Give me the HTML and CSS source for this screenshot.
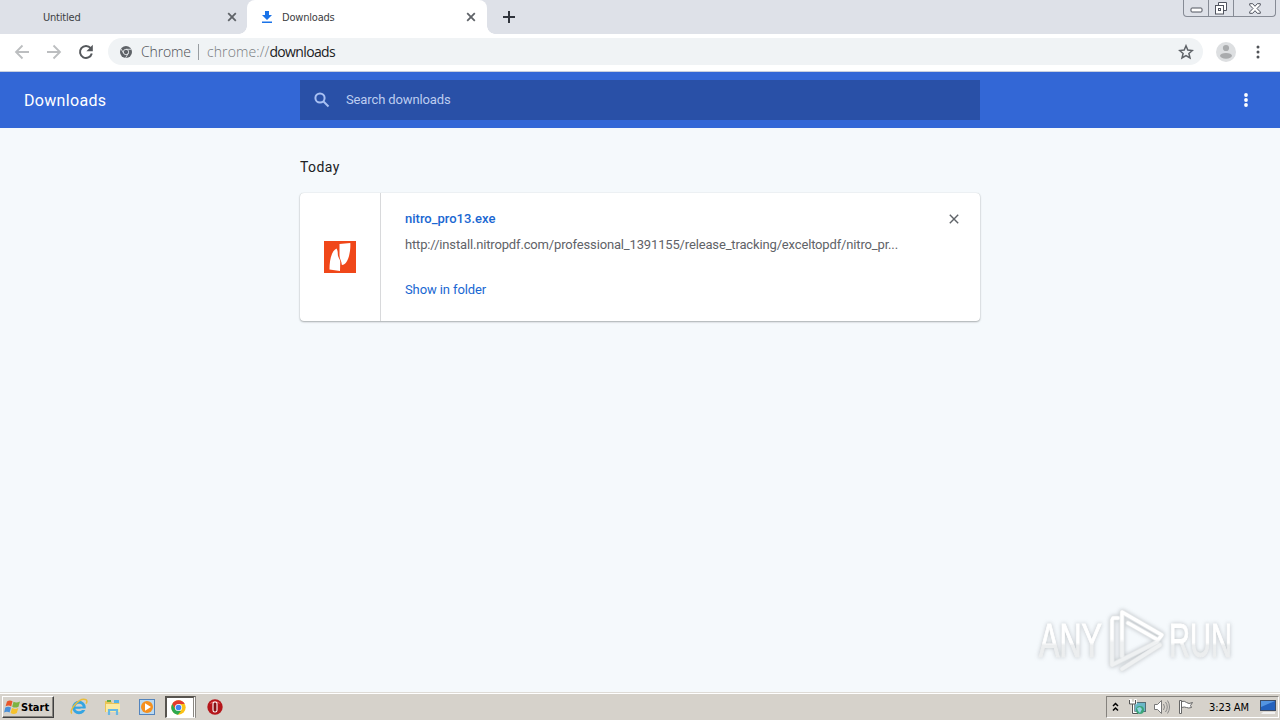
FILE: index.html
```html
<!DOCTYPE html>
<html lang="en">
<head>
  <meta charset="UTF-8" />
  <meta name="viewport" content="width=device-width, initial-scale=1.0"/>
  <title>Downloads</title>
  <link rel="stylesheet" href="styles.css">
</head>
<body>

  <div class="tabstrip">
    <div class="tab">
      <span class="tab-title">Untitled</span>
      <svg class="tab-close" width="10" height="10" viewBox="0 0 10 10"><path d="M1.2 1.2l7.6 7.6M8.8 1.2L1.2 8.8"/></svg>
    </div>
    <div class="tab active">
      <svg class="tab-icon" width="12" height="12" viewBox="0 0 12 12"><path d="M4 0h4v4h3L6 9 1 4h3zM1 10.4h10V12H1z"/></svg>
      <span class="tab-title">Downloads</span>
      <svg class="tab-close" width="10" height="10" viewBox="0 0 10 10"><path d="M1.2 1.2l7.6 7.6M8.8 1.2L1.2 8.8"/></svg>
    </div>
    <svg class="new-tab" width="12" height="12" viewBox="0 0 12 12"><path d="M6 0v12M0 6h12"/></svg>
    <div class="window-buttons">
      <span class="win-min"><svg width="13" height="6" viewBox="0 0 13 6"><rect x="1" y="1" width="11" height="4" rx="1"/></svg></span>
      <span class="win-max"><svg width="14" height="13" viewBox="0 0 14 13"><path d="M4.5 3.5v-3h8v8h-3"/><rect x="1.5" y="3.5" width="8" height="8.500"/><rect x="4.500" y="6.500" width="2" height="2"/></svg></span>
      <span class="win-close"><svg width="12" height="11" viewBox="0 0 12 11"><path d="M.7.7h3L6 3.300 8.300.7h3v1.400L8 5.500l3.300 3.400v1.400h-3L6 7.700l-2.300 2.600h-3V8.900L4 5.500.7 2.100z"/></svg></span>
    </div>
  </div>

  <div class="toolbar">
    <svg class="nav-icon" width="16" height="16" viewBox="0 0 16 16"><path d="M15 8H2M8.500 1.500L2 8l6.500 6.500"/></svg>
    <svg class="nav-icon" width="16" height="16" viewBox="0 0 16 16"><path d="M1 8h13M7.500 1.500L14 8l-6.500 6.500"/></svg>
    <svg class="nav-icon reload" width="16" height="16" viewBox="0 0 16 16"><path d="M12.700 4.200A6 6 0 1 0 13.800 9.500"/><path class="solid" d="M14.800.8v6.400H8.400z"/></svg>
    <div class="omnibox">
      <svg class="site-icon" width="12" height="12" viewBox="0 0 12 12"><circle cx="6" cy="6" r="6"/><g><circle cx="6" cy="6" r="2.700"/><path d="M6 3.300h5.400M3.700 7.300L1 2.900M8.300 7.300l-2.700 4.600"/></g></svg>
      <span class="site-name">Chrome</span>
      <span class="divider"></span>
      <span class="url">chrome://<b>downloads</b></span>
      <svg class="star" width="16" height="16" viewBox="0 0 16 16"><path d="M8 1.800l1.800 4.300 4.600.4-3.500 3 1.100 4.500L8 11.600 4 14l1.100-4.500-3.500-3 4.600-.4z"/></svg>
    </div>
    <svg class="avatar" width="20" height="20" viewBox="0 0 20 20"><circle class="disc" cx="10" cy="10" r="10"/><circle cx="10" cy="6" r="3.100"/><ellipse cx="10" cy="13.800" rx="6" ry="2.900"/></svg>
    <svg class="menu" width="4" height="14" viewBox="0 0 4 14"><circle cx="2" cy="2" r="1.500"/><circle cx="2" cy="7" r="1.500"/><circle cx="2" cy="12" r="1.500"/></svg>
  </div>

  <header>
    <h1>Downloads</h1>
    <div class="search">
      <svg width="16" height="16" viewBox="0 0 16 16"><circle cx="6" cy="6" r="4.600"/><path d="M9.500 9.500l5 5"/></svg>
      <span>Search downloads</span>
    </div>
    <svg class="more" width="4" height="14" viewBox="0 0 4 14"><circle cx="2" cy="2" r="1.900"/><circle cx="2" cy="7" r="1.900"/><circle cx="2" cy="12" r="1.900"/></svg>
  </header>

  <main>
    <h2>Today</h2>
    <div class="card">
      <div class="file-icon">
        <svg width="32" height="32" viewBox="0 0 32 32"><rect width="32" height="32" fill="#f04719"/><path fill="#fff" d="M15.500 3l10.800-1c.4 6.700-1 15.300-4.200 19.500-1.100 1.400-2.500 2.200-4.200 2.400-.3-3.500-2.600-6.500-2.400-10zM12.500 7.500c1 1.500 1.300 3 1.300 5.500 0 4 3 5 2.400 9.500L16 30 5.500 28.500C5.500 19 7.500 10 12.500 7.500z"/></svg>
      </div>
      <div class="details">
        <div class="title-row">
          <a class="file-name">nitro_pro13.exe</a>
          <svg class="remove" width="10" height="10" viewBox="0 0 10 10"><path d="M.8.8l8.400 8.400M9.200.8L.8 9.200"/></svg>
        </div>
        <div class="file-url">http://install.nitropdf.com/professional_1391155/release_tracking/exceltopdf/nitro_pr...</div>
        <a class="show">Show in folder</a>
      </div>
    </div>
  </main>

  <svg class="watermark" width="250" height="76" viewBox="0 0 250 76">
    <defs>
      <linearGradient id="fade" x1="0" y1="0" x2="0" y2="1">
        <stop offset="0.550" stop-color="#fff"/>
        <stop offset="0.600" stop-color="#eceeef"/>
      </linearGradient>
      <linearGradient id="play-fade" gradientUnits="userSpaceOnUse" x1="0" y1="0" x2="0" y2="70">
        <stop offset="0.500" stop-color="#fff"/>
        <stop offset="0.550" stop-color="#eff1f2"/>
      </linearGradient>
    </defs>
    <text x="9" y="53" textLength="63" lengthAdjust="spacingAndGlyphs">ANY</text>
    <text x="139" y="53" textLength="63" lengthAdjust="spacingAndGlyphs">RUN</text>
    <g class="play">
      <path class="edge" d="M88 14h-5l-1 2v45l45-23M92 52V8l40 23-4 5-30-17M92 65l38-24"/>
      <path class="line" d="M88 14h-5l-1 2v45l45-23M92 52V8l40 23-4 5-30-17M92 65l38-24"/>
    </g>
  </svg>

  <footer>
    <div class="start">
      <svg width="17" height="16" viewBox="0 0 17 16"><path fill="#e8562a" d="M3 2.500C5 1 7 1.300 8.500 2.300L7.200 7.500C5.500 6.300 3.500 6.400 1.600 7.300z"/><path fill="#7cb342" d="M9.500 2.800c2 1.100 4 1 6.500-.3l-1.500 5.200c-2.200 1.200-4.300 1.200-6.300 0z"/><path fill="#4a90d9" d="M1.300 8.500c2-1.100 4-1 5.700.1l-1.400 5c-1.600-1.200-3.600-1.100-5.500-.2z"/><path fill="#f6c22d" d="M8 9.100c2 1.100 4 1 6.300-.1l-1.500 5c-2.200 1.300-4.200 1.200-6.200 0z"/></svg>
      <span>Start</span>
    </div>
    <div class="quick">
      <svg width="18" height="18" viewBox="0 0 18 18"><circle cx="9" cy="9.500" r="5.300" fill="none" stroke="#35a5e2" stroke-width="3"/><path d="M4 9.700h10" stroke="#35a5e2" stroke-width="2.200"/><path d="M10.500 12h6v-1.500h-6z" fill="#d6d3ce"/><path d="M2 15.500C-2 13 9-1 16 1.700c1.500.8.8 2.800 0 4" fill="none" stroke="#e9bd3b" stroke-width="1.500"/></svg>
      <svg width="18" height="18" viewBox="0 0 18 18"><path fill="#e9c456" d="M1 3h6l1 2h7v9H1z"/><path fill="#fbeaa2" d="M2 6h14v8H2z"/><path fill="#62aa43" d="M3 2h4v2H3z"/><path fill="#58b4e5" d="M10 2h5v3h-5z"/><path fill="none" stroke="#68b8e2" stroke-width="2.200" d="M5 17v-5h8v5"/></svg>
      <svg width="18" height="18" viewBox="0 0 18 18"><rect x="1.500" y="1.500" width="15" height="15" fill="#bad9f1" stroke="#5384bd"/><circle cx="9" cy="9" r="6" fill="#f5901e"/><path fill="#fff" d="M7 5.300l6 3.700-6 3.700z"/></svg>
      <span class="task">
        <svg width="15" height="15" viewBox="0 0 48 48"><circle cx="24" cy="24" r="23" fill="#fbc116"/><path fill="#e33b2e" d="M4 12.500A23 23 0 0 1 44 12.500H24L14 30z"/><path fill="#2da94f" d="M4 12.500L14 30l10 5 8 0-10 12A23 23 0 0 1 4 12.500z"/><circle cx="24" cy="24" r="11.500" fill="#fff"/><circle cx="24" cy="24" r="9" fill="#4285f4"/></svg>
      </span>
      <svg width="16" height="16" viewBox="0 0 16 16"><circle cx="8" cy="8" r="7.700" fill="#b5161b"/><path fill="#ee6664" d="M2.500 5a6.500 6 0 0 1 11 0Q8 2.500 2.500 5z"/><rect x="6" y="3" width="4" height="10" rx="1.800" fill="#851013" stroke="#fff" stroke-width="1.100"/></svg>
    </div>
    <div class="tray">
      <svg class="expand" width="7" height="10" viewBox="0 0 7 10"><path class="chevrons" d="M1 4l2.500-2.500L6 4M1 8.500L3.500 6 6 8.500"/></svg>
      <svg width="17" height="16" viewBox="0 0 17 16"><rect x="5.500" y="3.500" width="11" height="9" fill="#69b7c7" stroke="#536c75"/><path fill="none" stroke="#fff" stroke-width="2.600" d="M1.500 0v4h5V0M4 4v10h4"/><path fill="none" stroke="#555" d="M.5 1v4h6V1M3.500 5v9.500H9"/><circle cx="11" cy="11" r="4" fill="#3ca579"/><path fill="#92d1e6" d="M8 9l3-1 2 2-2 4-2-2z"/></svg>
      <svg width="18" height="16" viewBox="0 0 18 16"><path fill="#fff" stroke="#777" d="M1.500 5.500h3l4-4v13l-4-4h-3z"/><path fill="none" stroke="#888" d="M10.500 5q2 3 0 6M12.500 3q3.500 5 0 10M14.500 1.500q4 6.500 0 13"/></svg>
      <svg width="16" height="16" viewBox="0 0 16 16"><path fill="#fff" stroke="#666" d="M1.500 1.500h2v13h-2zM3.500 2.500q3-1 5 1t6 0l-2 3 1 2q-3 1-5 0t-5 0z"/></svg>
      <span class="clock">3:23 AM</span>
      <svg class="desktop" width="17" height="14" viewBox="0 0 17 14"><rect x=".5" y=".5" width="15" height="10" fill="#2361bd" stroke="#3d4c65"/><path fill="#5394e1" d="M1 1h14L1 7z"/><path fill="#f1f1f1" d="M3 12h12v2H1z"/></svg>
    </div>
  </footer>

</body>
</html>
```
FILE: styles.css
```css
* {
  box-sizing: border-box;
}

body {
  margin: 0;
  height: 720px;
  display: flex;
  flex-direction: column;
  overflow: hidden;
  background: #f5f9fc;
  font-family: Roboto, sans-serif;
}

svg {
  display: block;
  flex: none;
}

.tabstrip {
  display: flex;
  align-items: center;
  height: 34px;
  background: #dee1e8;
  font-family: "DejaVu Sans Condensed", "DejaVu Sans", sans-serif;
  font-stretch: condensed;
  font-size: 11px;
  color: #3c4043;
}

.tab {
  display: flex;
  align-items: center;
  width: 247px;
  height: 34px;
  padding: 0 10px 0 43px;
}

.tab.active {
  position: relative;
  width: 240px;
  padding: 0 11px 0 14px;
  background: #fff;
  border-radius: 8px 8px 0 0;
}

/* flared feet of the active tab */
.tab.active::before,
.tab.active::after {
  content: "";
  position: absolute;
  bottom: 0;
  width: 8px;
  height: 8px;
}

.tab.active::before {
  left: -8px;
  background: radial-gradient(circle at 0 0, transparent 7.5px, #fff 8px);
}

.tab.active::after {
  right: -8px;
  background: radial-gradient(circle at 100% 0, transparent 7.5px, #fff 8px);
}

.tab-title {
  flex: 1;
  letter-spacing: -0.2px;
}

.tab-icon {
  margin-right: 9px;
  fill: #1a73e8;
}

.tab-close {
  fill: none;
  stroke: #5f6368;
  stroke-width: 1.8;
}

.new-tab {
  margin-left: 16px;
  stroke: #30343c;
  stroke-width: 2;
}

.window-buttons {
  display: flex;
  align-self: flex-start;
  width: 93px;
  height: 17px;
  margin-left: auto;
  margin-right: 4px;
  border: 1px solid #868b95;
  border-top: 0;
  border-radius: 0 0 4px 4px;
}

.window-buttons span {
  display: flex;
  justify-content: center;
  width: 25px;
  padding-top: 2px;
  border-right: 1px solid #868b95;
}

.window-buttons .win-min {
  padding-top: 7px;
}

.window-buttons .win-close {
  width: 41px;
  padding-top: 3px;
  border-right: 0;
}

.window-buttons svg {
  fill: #fff;
  stroke: #50545f;
}

.toolbar {
  display: flex;
  align-items: center;
  height: 38px;
  padding: 0 20px 2px 14px;
  background: #fff;
  border-bottom: 1px solid #c9d0df;
}

.nav-icon {
  margin-right: 16px;
  fill: none;
  stroke: #bcbec0;
  stroke-width: 1.8;
}

.nav-icon.reload {
  margin-right: 14px;
  stroke: #55585c;
  stroke-width: 2;
}

.nav-icon .solid {
  fill: #55585c;
  stroke: none;
}

.omnibox {
  display: flex;
  align-items: center;
  width: 1095px;
  height: 27px;
  padding: 0 9px 0 12px;
  border-radius: 14px;
  background: #f0f3f5;
  font-family: "Open Sans", "Noto Sans", sans-serif;
  font-weight: 300;
  font-size: 14px;
  color: #4c4f54;
}

.site-icon {
  fill: #5f6368;
  margin-right: 9px;
}

.site-icon g {
  stroke: #f0f3f5;
  stroke-width: 0.8;
}

.site-name {
  width: 50px;
  letter-spacing: -0.15px;
}

.divider {
  width: 1px;
  height: 16px;
  margin: 0 8px 0 7px;
  background: #999da1;
}

.url {
  flex: 1;
  letter-spacing: 0.1px;
  color: #777b80;
}

.url b {
  font-weight: 400;
  letter-spacing: -0.65px;
  color: #202124;
}

.star {
  fill: none;
  stroke: #5f6368;
  stroke-width: 1.5;
}

.avatar {
  margin-left: 13px;
  fill: #a9abad;
}

.avatar .disc {
  fill: #dddfe1;
}

.menu {
  margin-left: auto;
  fill: #505357;
}

header {
  display: flex;
  align-items: center;
  height: 56px;
  padding: 0 32px 0 24px;
  background: #3367d6;
  color: #fff;
}

h1 {
  width: 276px;
  margin: 0;
  font-size: 16px;
  font-weight: 400;
  letter-spacing: 0.32px;
}

.search {
  display: flex;
  align-items: center;
  width: 680px;
  height: 40px;
  padding: 0 0 1px 14px;
  background: #2950a7;
  color: #bdcdf0;
  font-size: 13px;
  letter-spacing: -0.12px;
}

.search svg {
  margin-right: 16px;
  fill: none;
  stroke: #a8c0f3;
  stroke-width: 2;
}

.more {
  margin-left: auto;
  fill: #fff;
}

main {
  flex: 1;
  width: 680px;
  margin: 0 auto;
  padding-top: 30px;
}

h2 {
  margin: 0 0 16px;
  font-size: 14px;
  line-height: 19px;
  font-weight: 400;
  letter-spacing: 0.4px;
  color: #202124;
}

.card {
  display: flex;
  height: 128px;
  border-radius: 4px;
  background: #fff;
  box-shadow: 0 1px 2px rgba(60, 64, 67, 0.4), 0 0 1px rgba(60, 64, 67, 0.25);
}

.file-icon {
  display: flex;
  align-items: center;
  justify-content: center;
  width: 81px;
  border-right: 1px solid #d8d9db;
}

.details {
  flex: 1;
  padding: 16px 21px 0 24px;
  font-size: 13px;
  line-height: 20px;
}

.title-row {
  display: flex;
  align-items: center;
  justify-content: space-between;
  margin-bottom: 6px;
}

.file-name {
  font-weight: 500;
  color: #1a67d2;
}

.remove {
  stroke: #5f6368;
  stroke-width: 1.4;
}

.file-url {
  margin-bottom: 25px;
  letter-spacing: -0.155px;
  color: #5f6368;
  white-space: nowrap;
}

.show {
  letter-spacing: -0.1px;
  color: #1967d2;
}

.watermark {
  position: absolute;
  left: 1030px;
  top: 604px;
  overflow: visible;
  filter: drop-shadow(0 0 2px rgba(90, 95, 100, 0.35));
}

.watermark text {
  font-family: "Liberation Sans", sans-serif;
  font-size: 49px;
  fill: url(#fade);
  stroke: url(#fade);
  stroke-width: 1;
}

.play path {
  fill: none;
  stroke-linejoin: round;
  stroke-linecap: round;
}

.play .edge {
  stroke: #e3e6e8;
  stroke-width: 5;
}

.play .line {
  stroke: url(#play-fade);
  stroke-width: 3.4;
}

footer {
  display: flex;
  align-items: center;
  height: 28px;
  padding: 1px 1px 0 2px;
  border-top: 1px solid #dedbd6;
  background: #d6d2cb;
  box-shadow: inset 0 1px #fff;
}

.start {
  display: flex;
  align-items: center;
  width: 52px;
  height: 22px;
  padding-left: 1px;
  border: 1px solid;
  border-color: #fff #404040 #404040 #fff;
  box-shadow: inset -1px -1px #87847f;
  font-family: "DejaVu Sans Condensed", "DejaVu Sans", sans-serif;
  font-stretch: condensed;
  font-weight: bold;
  font-size: 11px;
  color: #000;
}

.quick {
  display: flex;
  align-items: center;
  gap: 16px;
  margin-left: 16px;
}

.task {
  display: flex;
  align-items: center;
  width: 31px;
  height: 22px;
  margin: 0 -5px 0 -7px;
  padding-left: 4px;
  background: #fff;
  border: 1px solid #57544f;
  border-width: 2px 3px 1px 2px;
  border-right: 3px double #8a8782;
  border-bottom-color: #fff;
}

.tray {
  display: flex;
  align-items: center;
  width: 173px;
  height: 22px;
  margin-left: auto;
  padding-left: 5px;
  border: 1px solid;
  border-color: #85827d #fff #fff #85827d;
  font-family: "DejaVu Sans Condensed", "DejaVu Sans", sans-serif;
  font-stretch: condensed;
  font-size: 11px;
  color: #000;
}

.tray svg {
  margin-right: 7px;
}

.tray .expand {
  margin-right: 10px;
}

.tray .desktop {
  margin-right: 0;
}

.chevrons {
  fill: none;
  stroke: #000;
  stroke-width: 1.5;
}

.clock {
  flex: none;
  width: 50px;
  margin-left: 8px;
  margin-right: 1px;
  letter-spacing: -0.1px;
  white-space: nowrap;
}
```
